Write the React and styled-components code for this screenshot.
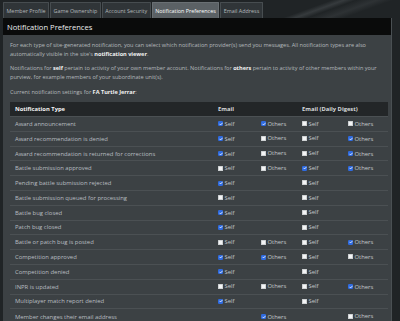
import React from "react";
import styled, { createGlobalStyle } from "styled-components";

const GlobalStyle = createGlobalStyle`
  html, body { margin: 0; padding: 0; background: #202426; }
  body { font-family: "Open Sans", "Noto Sans", sans-serif; }
`;

const Page = styled.div`
  width: 400px;
  height: 321px;
  overflow: hidden;
  padding: 0 8px 0 3px;
  box-sizing: border-box;
  background:
    linear-gradient(160deg, transparent 0 40%, rgba(110, 116, 120, 0.28) 46%, transparent 52%, rgba(95, 100, 104, 0.22) 62%, transparent 70%) right top / 150px 20px no-repeat,
    #202426;
`;

const TabBar = styled.div`
  display: flex;
  gap: 1px;
  padding-top: 2px;
  height: 16px;
`;

const Tab = styled.div`
  display: flex;
  align-items: center;
  padding: 0 2.5px;
  font-size: 5.4px;
  white-space: nowrap;
  color: ${(p) => (p.$active ? "#ffffff" : "#b3b8bb")};
  background: ${(p) => (p.$active ? "#5b6165" : "#303538")};
  border: 1px solid ${(p) => (p.$active ? "#6a7074" : "#474d50")};
  border-bottom: none;
  border-radius: 1px 1px 0 0;
`;

const Panel = styled.div`
  background: #3c4144;
  border-right: 1px solid #4a5053;
  height: 400px;
`;

const PanelHeader = styled.div`
  background: #0a0b0b;
  height: 17px;
  display: flex;
  align-items: center;
  padding-left: 4px;
  font-size: 7.6px;
  color: #eceeef;
`;

const PanelBody = styled.div`
  padding: 6px 4px 0 7px;
`;

const Para = styled.p`
  margin: 0 0 ${(p) => p.$mb || 6}px;
  font-size: 5.6px;
  line-height: 8.7px;
  color: #b4b9bc;
  letter-spacing: -0.02px;
  b { color: #f2f2f2; font-weight: 700; }
`;

const Table = styled.table`
  width: 378px;
  border-collapse: collapse;
  table-layout: fixed;
`;

const HeadRow = styled.tr`
  background: #232628;
  height: 15px;
`;

const HeadCell = styled.th`
  text-align: left;
  padding: 0 0 0 5px;
  font-size: 5.8px;
  font-weight: 700;
  color: ${(p) => (p.$bright ? "#f4f4f4" : "#d6d9db")};
  white-space: nowrap;
`;

const Row = styled.tr`
  height: 14.8px;
  border-top: 1px solid #4b5053;
`;

const Cell = styled.td`
  padding: 0 0 0 5px;
  font-size: 5.9px;
  color: #b9bec1;
  white-space: nowrap;
  vertical-align: middle;
`;

const CheckLabel = styled.span`
  display: inline-flex;
  align-items: center;
  gap: 1.5px;
  font-size: 5.9px;
  color: #c4c8cb;
`;

const Box = styled.span`
  width: 5px;
  height: 5px;
  box-sizing: border-box;
  display: inline-flex;
  align-items: center;
  justify-content: center;
  border-radius: ${(p) => (p.$on ? "1.2px" : "0.5px")};
  background: ${(p) => (p.$on ? "#2f6be0" : "#f3f4f5")};
  border: ${(p) => (p.$on ? "none" : "0.5px solid #d0d3d5")};
`;

const Check = ({ on, label }) => (
  <CheckLabel>
    <Box $on={on}>
      {on && (
        <svg width="4" height="4" viewBox="0 0 10 10">
          <path d="M1.8 5.2 L4 7.4 L8.4 2.6" fill="none" stroke="#fff" strokeWidth="2" strokeLinecap="round" strokeLinejoin="round" />
        </svg>
      )}
    </Box>
    {label}
  </CheckLabel>
);

// values: true checked, false unchecked, null absent
const rows = [
  ["Award announcement", true, true, false, false],
  ["Award recommendation is denied", true, false, false, true],
  ["Award recommendation is returned for corrections", true, false, false, true],
  ["Battle submission approved", false, false, true, true],
  ["Pending battle submission rejected", true, null, false, null],
  ["Battle submission queued for processing", false, null, false, null],
  ["Battle bug closed", true, null, false, null],
  ["Patch bug closed", true, null, false, null],
  ["Battle or patch bug is posted", false, false, false, true],
  ["Competition approved", true, true, false, false],
  ["Competition denied", true, null, false, null],
  ["INPR is updated", false, false, false, true],
  ["Multiplayer match report denied", true, null, false, null],
  ["Member changes their email address", null, true, null, false],
];

const labels = ["Self", "Others", "Self", "Others"];

export default function App() {
  return (
    <>
      <GlobalStyle />
      <Page>
        <TabBar>
          <Tab>Member Profile</Tab>
          <Tab>Game Ownership</Tab>
          <Tab>Account Security</Tab>
          <Tab $active>Notification Preferences</Tab>
          <Tab>Email Address</Tab>
        </TabBar>
        <Panel>
          <PanelHeader>Notification Preferences</PanelHeader>
          <PanelBody>
            <Para>
              For each type of site-generated notification, you can select which notification provider(s) send you
              messages. All notification types are also automatically visible in the site's <b>notification viewer</b>.
            </Para>
            <Para>
              Notifications for <b>self</b> pertain to activity of your own member account. Notifications for{" "}
              <b>others</b> pertain to activity of other members within your purview, for example members of your
              subordinate unit(s).
            </Para>
            <Para $mb={5}>
              Current notification settings for <b>FA Turtle Jerrar</b>:
            </Para>
            <Table>
              <colgroup>
                <col style={{ width: 203 }} />
                <col style={{ width: 43 }} />
                <col style={{ width: 41 }} />
                <col style={{ width: 46 }} />
                <col style={{ width: 45 }} />
              </colgroup>
              <thead>
                <HeadRow>
                  <HeadCell $bright>Notification Type</HeadCell>
                  <HeadCell colSpan={2}>Email</HeadCell>
                  <HeadCell colSpan={2}>Email (Daily Digest)</HeadCell>
                </HeadRow>
              </thead>
              <tbody>
                {rows.map(([name, ...vals]) => (
                  <Row key={name}>
                    <Cell>{name}</Cell>
                    {vals.map((v, i) => (
                      <Cell key={i}>{v === null ? null : <Check on={v} label={labels[i]} />}</Cell>
                    ))}
                  </Row>
                ))}
              </tbody>
            </Table>
          </PanelBody>
        </Panel>
      </Page>
    </>
  );
}
